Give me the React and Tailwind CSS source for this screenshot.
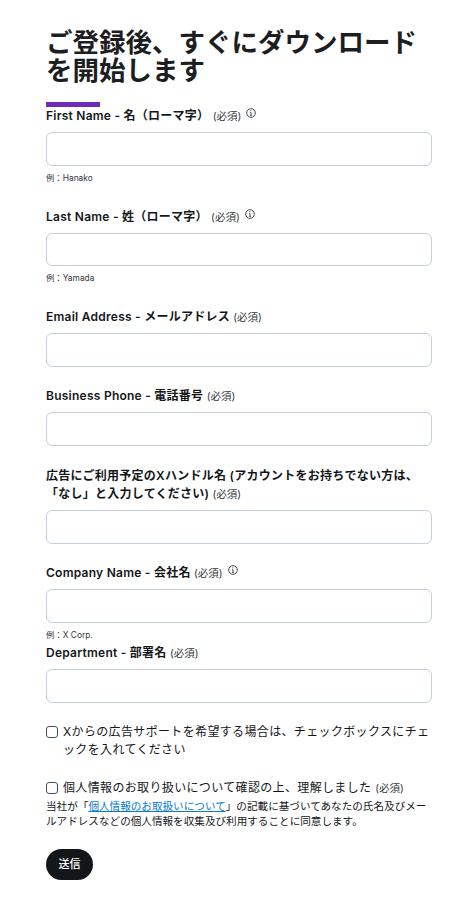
import React from 'react';

const fontStack = "font-['Inter','Noto_Sans_CJK_JP',sans-serif]";

const InfoIcon = () => (
  <svg width="10" height="10" viewBox="0 0 10 10" fill="none" stroke="#1c1e21" strokeWidth="0.8" className="mb-[7px] ml-[5px] inline-block align-middle">
    <circle cx="5" cy="5" r="4.3" />
    <path d="M5 4.4V7.4M4.2 7.4H5.8M4.3 4.4H5" />
    <circle cx="4.9" cy="2.8" r="0.5" fill="#1c1e21" stroke="none" />
  </svg>
);

const Required = () => <span className="text-[10.5px] tracking-normal font-normal text-[#33373b]">(必須)</span>;

const Field = ({ label, info, hint, className = '' }) => (
  <div className={className}>
    <div className="h-[26px] pt-[1px] text-[12px] leading-[18px] tracking-[0.25px] font-semibold text-[#14171a]">
      {label} <Required />
      {info && <InfoIcon />}
    </div>
    <input type="text" className="block h-[33.5px] w-full rounded-[6px] border border-[#c4d0de] bg-white" />
    {hint && <div className="mt-[6px] text-[8.4px] leading-[12px] text-[#33373b]">{hint}</div>}
  </div>
);

const App = () => {
  return (
    <div className={`${fontStack} bg-white pt-[28px] pr-[44px] pb-[29px] pl-[46px] text-[#14171a]`}>
      <h1 className="text-[26.5px] leading-[28px] font-bold text-[#1c1e21]">ご登録後、すぐにダウンロードを開始します</h1>
      <div className="mt-[18px] h-[5px] w-[54px] bg-[#6b2db8]" />

      <Field className="mt-[-1px]" label="First Name - 名（ローマ字）" info hint="例：Hanako" />
      <Field className="mt-[23px]" label="Last Name - 姓（ローマ字）" info hint="例：Yamada" />
      <Field className="mt-[23px]" label="Email Address - メールアドレス" />
      <Field className="mt-[19.5px]" label="Business Phone - 電話番号" />
      <div className="mt-[20.5px]">
        <div className="pt-[1px] pb-[6px] text-[12px] leading-[18px] tracking-[0.25px] font-semibold text-[#14171a]">
          広告にご利用予定のXハンドル名 (アカウントをお持ちでない方は、「なし」と入力してください) <Required />
        </div>
        <input type="text" className="block h-[33.5px] w-full rounded-[6px] border border-[#c4d0de] bg-white" />
      </div>
      <Field className="mt-[19.5px]" label="Company Name - 会社名" info hint="例：X Corp." />
      <Field className="mt-[2.5px]" label="Department - 部署名" />

      <label className="mt-[20.5px] flex items-start text-[12px] leading-[17.5px] tracking-[0.35px] text-[#14171a]">
        <input type="checkbox" className="mt-[3px] mr-[5px] h-[12px] w-[12px] shrink-0 appearance-none rounded-[3px] border border-[#3d4f63] bg-white" />
        <span>Xからの広告サポートを希望する場合は、チェックボックスにチェックを入れてください</span>
      </label>

      <label className="mt-[21px] flex items-start text-[12px] leading-[17.5px] tracking-[0.35px] text-[#14171a]">
        <input type="checkbox" className="mt-[3px] mr-[5px] h-[12px] w-[12px] shrink-0 appearance-none rounded-[3px] border border-[#3d4f63] bg-white" />
        <span>個人情報のお取り扱いについて確認の上、理解しました <span className="text-[10.5px] tracking-normal text-[#33373b]">(必須)</span></span>
      </label>
      <p className="mt-[1.5px] text-[10.6px] leading-[15px] text-[#14171a]">
        当社が「<a href="#" className="text-[#0a78d6] underline">個人情報のお取扱いについて</a>」の記載に基づいてあなたの氏名及びメールアドレスなどの個人情報を収集及び利用することに同意します。
      </p>

      <button className="mt-[19.5px] block h-[31px] w-[47px] rounded-full bg-[#14171a] text-[11px] font-medium text-white">送信</button>
    </div>
  );
};

export default App;
